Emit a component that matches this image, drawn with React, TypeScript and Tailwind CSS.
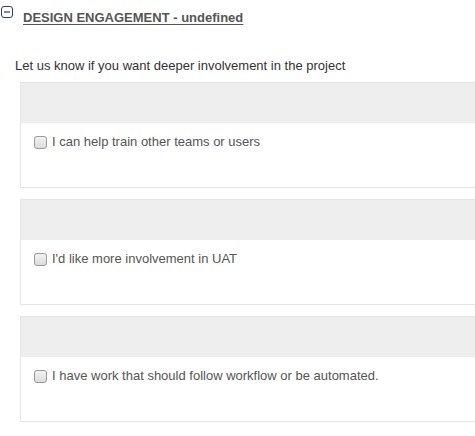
const items = [
  'I can help train other teams or users',
  "I'd like more involvement in UAT",
  'I have work that should follow workflow or be automated.',
]

function CollapseIcon() {
  return (
    <svg width="12" height="12" viewBox="0 0 12 12" className="shrink-0">
      <rect x="0.5" y="0.5" width="11" height="11" rx="2.5" fill="white" stroke="#2b3f55" strokeWidth="1" />
      <line x1="3" y1="6" x2="9" y2="6" stroke="#2b3f55" strokeWidth="1.2" />
    </svg>
  )
}

function FakeCheckbox() {
  return (
    <span className="mt-[3px] block h-[13px] w-[13px] shrink-0 rounded-[3px] border border-[#9a9a9a] bg-gradient-to-b from-[#f2f2f2] to-[#dcdcdc]" />
  )
}

export default function App() {
  return (
    <div
      className="relative h-[436px] w-[475px] overflow-hidden bg-white text-[13px] leading-[18px]"
      style={{ fontFamily: '"Liberation Sans", Arial, sans-serif' }}
    >
      {/* Section header */}
      <div className="flex items-start gap-[10px] pl-[1px] pt-[6px]">
        <CollapseIcon />
        <span className="mt-[3px] font-bold text-[#555] underline underline-offset-2">
          DESIGN ENGAGEMENT - undefined
        </span>
      </div>

      <p className="ml-[15px] mt-[30px] text-[#333]">
        Let us know if you want deeper involvement in the project
      </p>

      <div className="ml-[20px] mt-[7px] flex w-[500px] flex-col gap-[11px]">
        {items.map((label) => (
          <div key={label} className="border border-[#e6e6e6] bg-white">
            <div className="h-[40px] bg-[#eeeeee]" />
            <div className="h-[64px] pl-[13px] pt-[10px]">
              <label className="flex items-start gap-[5px] text-[#555]">
                <FakeCheckbox />
                <span>{label}</span>
              </label>
            </div>
          </div>
        ))}
      </div>
    </div>
  )
}
